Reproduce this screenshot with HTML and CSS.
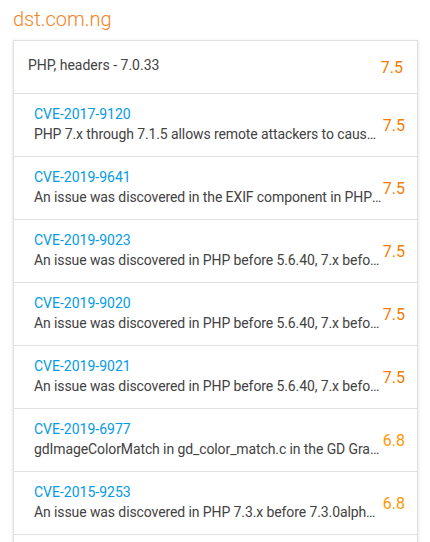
FILE: index.html
```html
<!DOCTYPE html>
<html>
<head>
    <title>dst.com.ng</title>
    <link rel="stylesheet" href="styles.css">
</head>
<body>
    <h1 class="site">dst.com.ng</h1>
    <ul class="card">
        <li class="product">
            <span class="product-name">PHP, headers - 7.0.33</span>
            <span class="score high">7.5</span>
        </li>
        <li class="vuln">
            <div class="vuln-text">
                <a class="cve" href="#">CVE-2017-9120</a>
                <div class="desc">PHP 7.x through 7.1.5 allows remote attackers to cause a denial of service</div>
            </div>
            <span class="score high">7.5</span>
        </li>
        <li class="vuln">
            <div class="vuln-text">
                <a class="cve" href="#">CVE-2019-9641</a>
                <div class="desc">An issue was discovered in the EXIF component in PHP before 7.1.27</div>
            </div>
            <span class="score high">7.5</span>
        </li>
        <li class="vuln">
            <div class="vuln-text">
                <a class="cve" href="#">CVE-2019-9023</a>
                <div class="desc">An issue was discovered in PHP before 5.6.40, 7.x before 7.1.26</div>
            </div>
            <span class="score high">7.5</span>
        </li>
        <li class="vuln">
            <div class="vuln-text">
                <a class="cve" href="#">CVE-2019-9020</a>
                <div class="desc">An issue was discovered in PHP before 5.6.40, 7.x before 7.1.26</div>
            </div>
            <span class="score high">7.5</span>
        </li>
        <li class="vuln">
            <div class="vuln-text">
                <a class="cve" href="#">CVE-2019-9021</a>
                <div class="desc">An issue was discovered in PHP before 5.6.40, 7.x before 7.1.26</div>
            </div>
            <span class="score high">7.5</span>
        </li>
        <li class="vuln">
            <div class="vuln-text">
                <a class="cve" href="#">CVE-2019-6977</a>
                <div class="desc">gdImageColorMatch in gd_color_match.c in the GD Graphics Library</div>
            </div>
            <span class="score medium">6.8</span>
        </li>
        <li class="vuln">
            <div class="vuln-text">
                <a class="cve" href="#">CVE-2015-9253</a>
                <div class="desc">An issue was discovered in PHP 7.3.x before 7.3.0alpha3. The arginfo</div>
            </div>
            <span class="score medium">6.8</span>
        </li>
        <li class="vuln">
            <div class="vuln-text">
                <a class="cve" href="#">CVE-2018-19935</a>
                <div class="desc">ext/imap/php_imap.c in PHP 5.x and 7.x before 7.3.0</div>
            </div>
            <span class="score medium">5.0</span>
        </li>
    </ul>
</body>
</html>
```
FILE: styles.css
```css
body {
    margin: 0;
    padding: 0 12px 0 13px;
    font-family: Roboto, "Liberation Sans", sans-serif;
    color: #424242;
    background: #fff;
}

h1.site {
    margin: 0;
    padding: 5px 0 0;
    height: 35px;
    font-size: 20px;
    font-weight: 300;
    line-height: 28px;
    color: #f5821f;
}

ul.card {
    list-style: none;
    margin: 0;
    padding: 0;
    border: 1px solid #e0e0e0;
    box-shadow: 0 1px 4px rgba(0, 0, 0, 0.12);
}

li.product {
    display: flex;
    align-items: center;
    height: 52px;
    padding: 0 14px 0 14px;
    border-bottom: 1px solid #e0e0e0;
    font-size: 14px;
}

.product-name {
    flex: 1;
    padding-bottom: 4px;
}

li.vuln {
    display: flex;
    align-items: center;
    height: 62px;
    padding: 0 12px 0 20px;
    border-bottom: 1px solid #e0e0e0;
}

.vuln-text {
    flex: 1;
    min-width: 0;
    padding-bottom: 2px;
}

a.cve {
    display: block;
    font-size: 14px;
    line-height: 20px;
    color: #039be5;
    text-decoration: none;
}

.desc {
    font-size: 14px;
    line-height: 20px;
    letter-spacing: -0.1px;
    white-space: nowrap;
    overflow: hidden;
    text-overflow: ellipsis;
}

.score {
    font-size: 16px;
    padding-left: 1px;
}

.score.high {
    color: #f57c00;
}

.score.medium {
    color: #ff9800;
}
```
